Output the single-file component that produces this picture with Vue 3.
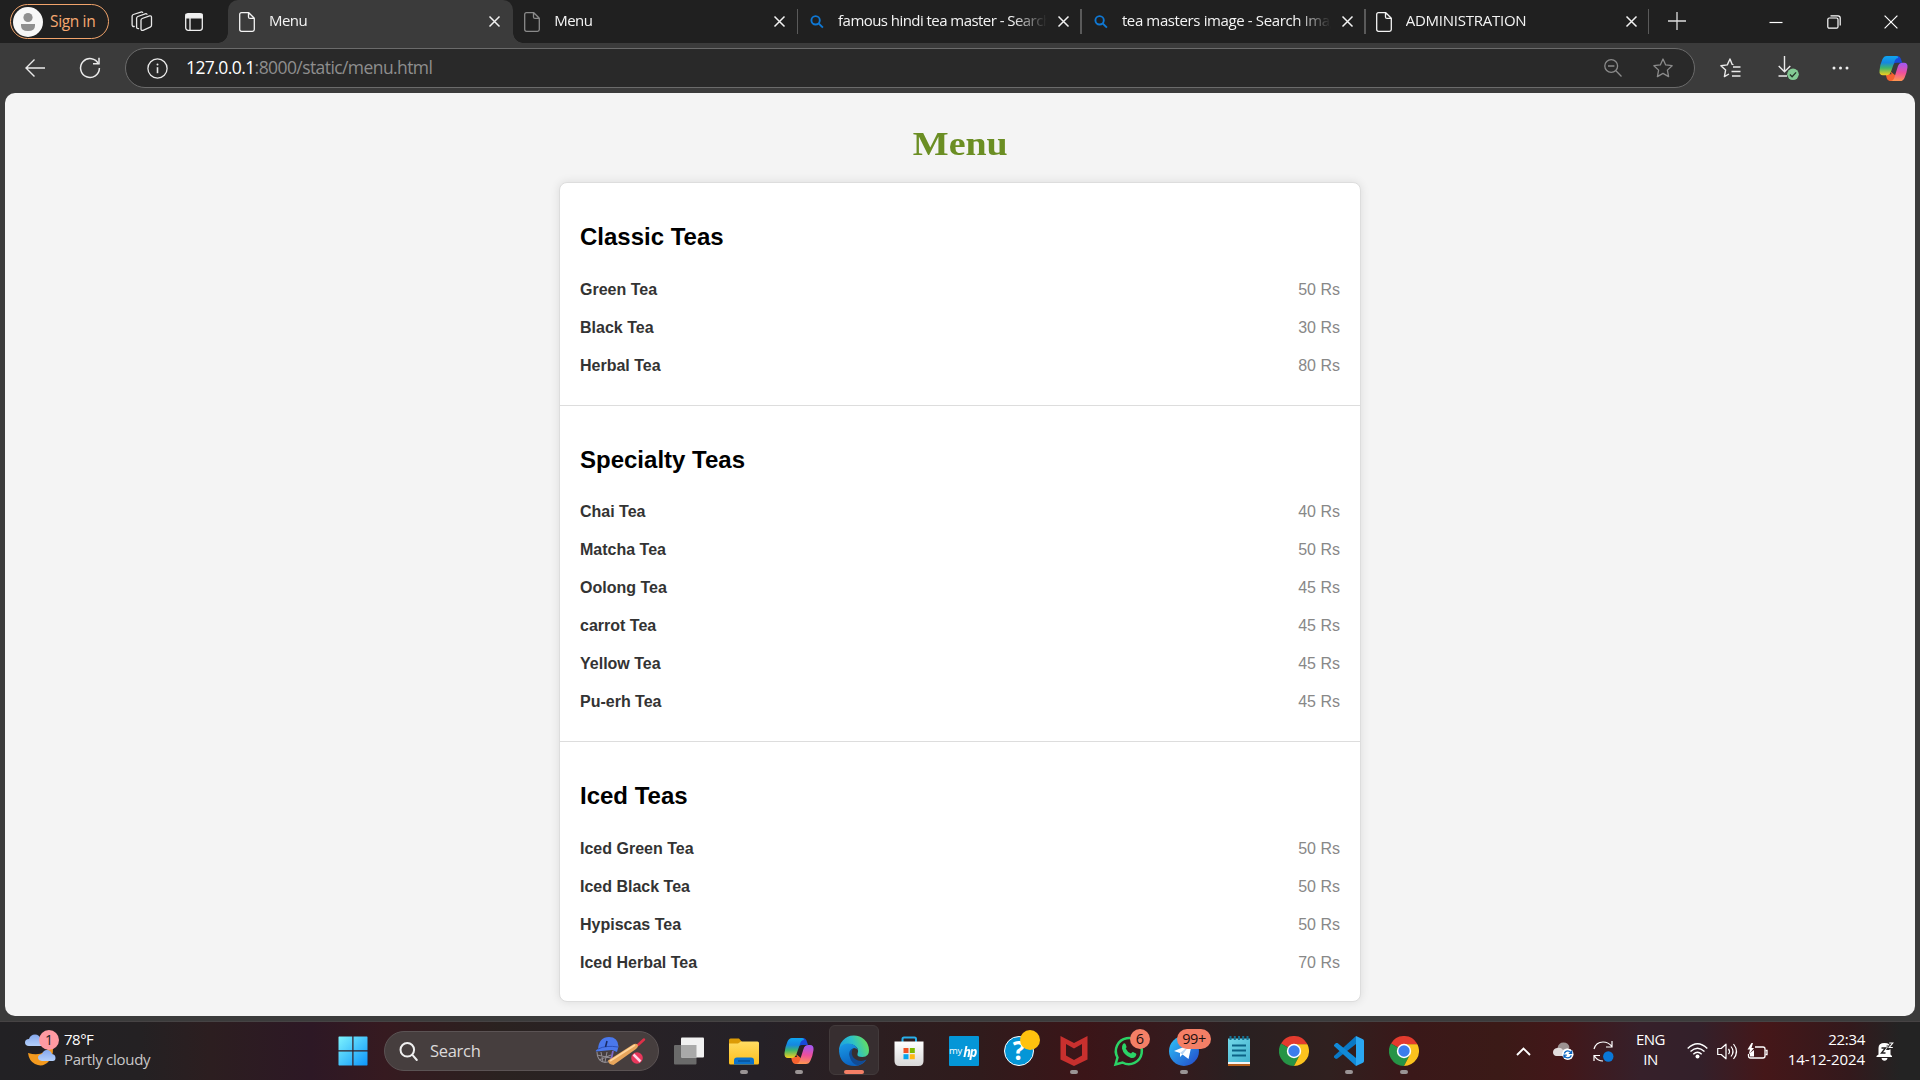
<script setup>
const tabs = [
  { title: 'Menu', icon: 'file', active: true },
  { title: 'Menu', icon: 'file', dim: true, line: true },
  { title: 'famous hindi tea master - Search', icon: 'search', line: true },
  { title: 'tea masters image - Search Images', icon: 'search', line: true, loose: true },
  { title: 'ADMINISTRATION', icon: 'file', line: true, caps: true }
]

const sections = [
  {
    name: 'Classic Teas',
    items: [['Green Tea', 50], ['Black Tea', 30], ['Herbal Tea', 80]]
  },
  {
    name: 'Specialty Teas',
    items: [
      ['Chai Tea', 40], ['Matcha Tea', 50], ['Oolong Tea', 45],
      ['carrot Tea', 45], ['Yellow Tea', 45], ['Pu-erh Tea', 45]
    ]
  },
  {
    name: 'Iced Teas',
    items: [['Iced Green Tea', 50], ['Iced Black Tea', 50], ['Hypiscas Tea', 50], ['Iced Herbal Tea', 70]]
  }
]

const apps = [
  { id: 'taskview' },
  { id: 'explorer', running: true },
  { id: 'copilot', running: true },
  { id: 'edge', focused: true },
  { id: 'store' },
  { id: 'myhp' },
  { id: 'help', dot: true },
  { id: 'mcafee', running: true },
  { id: 'whatsapp', badge: '6' },
  { id: 'telegram', running: true, badge: '99+' },
  { id: 'notepad' },
  { id: 'chrome' },
  { id: 'vscode', running: true },
  { id: 'chrome', running: true }
]
</script>

<template>
  <div class="screen">
    <!-- shared gradients and symbols -->
    <svg class="defs" width="0" height="0" aria-hidden="true">
      <defs>
        <linearGradient id="cpA" x1="0" y1="0" x2="0" y2="1">
          <stop offset="0" stop-color="#0fa5f0" /><stop offset=".35" stop-color="#1687e0" />
          <stop offset=".62" stop-color="#3fb56b" /><stop offset="1" stop-color="#f7cf1c" />
        </linearGradient>
        <linearGradient id="cpB" x1=".3" y1="0" x2=".2" y2="1">
          <stop offset="0" stop-color="#a457f0" /><stop offset=".5" stop-color="#ee4f9c" />
          <stop offset="1" stop-color="#ff9a4d" />
        </linearGradient>
        <linearGradient id="edA" x1="0" y1=".6" x2="1" y2=".3">
          <stop offset="0" stop-color="#1b9de2" /><stop offset=".5" stop-color="#2cc0c8" /><stop offset="1" stop-color="#6be356" />
        </linearGradient>
        <linearGradient id="edB" x1="0" y1="0" x2=".4" y2="1">
          <stop offset="0" stop-color="#1a9be6" /><stop offset="1" stop-color="#0b62c0" />
        </linearGradient>
        <linearGradient id="fold" x1="0" y1="0" x2="0" y2="1">
          <stop offset="0" stop-color="#ffdc63" /><stop offset="1" stop-color="#fdbf1c" />
        </linearGradient>
        <linearGradient id="winG" x1="0" y1="0" x2="1" y2="1">
          <stop offset="0" stop-color="#7df3fd" /><stop offset="1" stop-color="#0d95fb" />
        </linearGradient>
        <linearGradient id="storeG" x1="0" y1="0" x2="0" y2="1">
          <stop offset="0" stop-color="#fff" /><stop offset="1" stop-color="#d8d8d8" />
        </linearGradient>
        <linearGradient id="tgG" x1="0" y1="0" x2="1" y2="1">
          <stop offset="0" stop-color="#2cc6fa" /><stop offset="1" stop-color="#2447c8" />
        </linearGradient>
        <linearGradient id="noteG" x1="0" y1="0" x2="1" y2="1">
          <stop offset="0" stop-color="#72d8e9" /><stop offset="1" stop-color="#44b2cf" />
        </linearGradient>
        <linearGradient id="cloudG" x1="0" y1="0" x2="0" y2="1">
          <stop offset="0" stop-color="#86a9ee" /><stop offset="1" stop-color="#b4d0fb" />
        </linearGradient>
      </defs>
      <symbol id="copilot" viewBox="0 0 30 28">
        <path d="M15 1h4q3 0 4 4l1 3h-6q-3 0-4 3z" fill="#1a49d8" />
        <path d="M7 20h6l-1-3 6 5q-1 5-4 5h-3q-2 0-3-3z" fill="#f4622f" />
        <path d="M8 1h10q2 0 2 2-3 0-4 4l-3.500 10q-1.500 4-5 4H4q-4 0-3.500-5Q1 10 3.500 4.500 5 1 8 1z" fill="url(#cpA)" />
        <path d="M22 27H12q3-.5 4-4l3.500-11q1-4 5-4H26q4 0 3.500 5-.8 6-3 10.500Q25 27 22 27z" fill="url(#cpB)" />
      </symbol>
      <symbol id="chrome" viewBox="0 0 30 30">
        <path d="M15 15L2 7.500A15 15 0 0 1 28 7.500L28 8.500H15z" fill="#e33b2e" />
        <path d="M15 15L2 7.500A15 15 0 0 0 15 30L21 18.500z" fill="#269446" />
        <path d="M15 8.200H28.400A15 15 0 0 1 15 30L21 18.500z" fill="#fcc31e" />
        <circle cx="15" cy="15" r="7.200" fill="#fff" /><circle cx="15" cy="15" r="5.700" fill="#3b7ded" />
      </symbol>
    </svg>

    <header class="tabbar">
      <div class="profile">
        <svg width="30" height="30" viewBox="0 0 30 30"><circle cx="15" cy="15" r="15" fill="#f7f7f7" /><circle cx="15" cy="10.500" r="4.600" fill="#8f8f8f" /><path d="M8 17h14v1.500q0 5.500-7 5.500t-7-5.500z" fill="#8f8f8f" /></svg>
        <span>Sign in</span>
      </div>
      <svg class="workspaces" width="22" height="22" viewBox="0 0 22 22" fill="none" stroke="#e8e8e8" stroke-width="1.300" stroke-linejoin="round" stroke-linecap="round">
        <path d="M10 9.300q0-1.300 1.200-1.800l7.300-2.600q2-.5 2 1.300v8q0 1.400-1.300 1.900l-7.200 3.200q-2 .6-2-1.300z" />
        <path d="M7.600 17.600q-2 .2-2-1.600V7.300q0-1.300 1.200-1.800l7.400-2.700q1.300-.4 1.800.5" />
        <path d="M3.200 15.500q-2.100.1-2.100-1.700V5.200q0-1.200 1.200-1.700l7.500-2.400q1.200-.4 1.800.3" />
      </svg>
      <svg class="vtabs" width="18" height="18" viewBox="0 0 18 18" fill="none" stroke="#f0f0f0" stroke-width="1.300"><rect x=".7" y=".7" width="16.600" height="16.600" rx="2.500" /><path d="M1 1.500h16v3.400H1z" fill="#f0f0f0" /><path d="M5 5v12" /></svg>

      <div class="tabs">
        <div v-for="(t, i) in tabs" :key="i" class="tab" :class="{ active: t.active, line: t.line, dim: t.dim, caps: t.caps, loose: t.loose }">
          <svg v-if="t.icon === 'file'" class="favicon" width="16" height="20" viewBox="0 0 16 20" fill="none" stroke="currentColor" stroke-width="1.300" stroke-linejoin="round"><path d="M2.500.7h7.300l5.500 5.500v11.300q0 1.800-1.800 1.800h-11q-1.800 0-1.800-1.800v-15Q.7.700 2.500.7zM9.500.9v4q0 1.500 1.500 1.500h4.200" /></svg>
          <svg v-else class="favicon" width="16" height="16" viewBox="0 0 16 16" fill="none" stroke="#0f78d4" stroke-width="1.900"><circle cx="7.600" cy="6.300" r="4.200" /><path d="M10.600 9.300l4.300 4.300" /></svg>
          <span class="title">{{ t.title }}</span>
          <svg class="x" width="11" height="11" viewBox="0 0 11 11" stroke="#f2f2f2" stroke-width="1.500"><path d="M.5.500l10 10M10.500.500l-10 10" /></svg>
        </div>
      </div>

      <svg class="plus" width="18" height="18" viewBox="0 0 18 18" stroke="#dedede" stroke-width="1.300"><path d="M9 0v18M0 9h18" /></svg>
      <div class="winbtns">
        <svg width="14" height="14" viewBox="0 0 14 14" fill="none" stroke="#fff" stroke-width="1.200"><path d="M.5 7.500h13" /></svg>
        <svg width="14" height="14" viewBox="0 0 14 14" fill="none" stroke="#fff" stroke-width="1.200"><rect x=".8" y="3" width="10.200" height="10.200" rx="1.500" /><path d="M3.500.8h7.500q2.200 0 2.200 2.200v7.500" /></svg>
        <svg width="14" height="14" viewBox="0 0 14 14" fill="none" stroke="#fff" stroke-width="1.200"><path d="M.6.600l12.800 12.800M13.400.600L.6 13.400" /></svg>
      </div>
    </header>

    <div class="toolbar">
      <svg class="back" width="20" height="18" viewBox="0 0 20 18" fill="none" stroke="#eaeaea" stroke-width="1.400"><path d="M20 9H1M9.500.5L1 9l8.500 8.500" /></svg>
      <svg class="reload" width="22" height="22" viewBox="0 0 22 22" fill="none" stroke="#eaeaea" stroke-width="1.500"><path d="M19.500 7A9.400 9.400 0 1 0 20.400 11" /><path d="M14 6.800h6V.8" /></svg>
      <div class="address">
        <svg class="info" width="21" height="21" viewBox="0 0 21 21" fill="none" stroke="#eaeaea" stroke-width="1.300"><circle cx="10.500" cy="10.500" r="9.600" /><path d="M10.500 9.200v6" stroke-width="1.600" /><circle cx="10.500" cy="6.500" r="1" fill="#eaeaea" stroke="none" /></svg>
        <span class="url"><b>127.0.0.1</b>:8000/static/menu.html</span>
        <svg class="zoomout" width="18" height="18" viewBox="0 0 18 18" fill="none" stroke="#8b8b8b" stroke-width="1.300"><circle cx="7.200" cy="7" r="6.400" /><path d="M11.900 11.700l5.600 5.800M4 7h6.400" /></svg>
        <svg class="star" width="20" height="20" viewBox="0 0 20 20" fill="none" stroke="#8b8b8b" stroke-width="1.300" stroke-linejoin="round"><path d="M10 1l2.700 5.900 6.400.8-4.700 4.400 1.200 6.500L10 15.400l-5.600 3.200 1.200-6.500L.9 7.700l6.400-.8z" /></svg>
      </div>
      <svg class="favs" width="21" height="20" viewBox="0 0 21 20" fill="none" stroke="#eaeaea" stroke-width="1.400" stroke-linejoin="round"><path d="M13.500 6.600l-1.300-.2L10 1 7.300 6.900.9 7.700l4.700 4.400-1.200 6.500L9 16M13 9h7.500M11.500 13.500h9M12 18h8.500" /></svg>
      <svg class="down" width="21" height="24" viewBox="0 0 21 24" fill="none" stroke="#eaeaea" stroke-width="1.400"><path d="M6.500 0v15.500M.7 10l5.800 5.800 5.800-5.800M.5 20h8.500" /><circle cx="15" cy="18.300" r="5.800" fill="#83cb94" stroke="none" /><path d="M11.900 18.500l2.200 2.200 4-4.300" stroke="#26352a" stroke-width="1.300" /></svg>
      <svg class="more" width="17" height="4" viewBox="0 0 17 4" fill="#eee"><circle cx="2" cy="2" r="1.500" /><circle cx="8.500" cy="2" r="1.500" /><circle cx="15" cy="2" r="1.500" /></svg>
      <svg class="cp" width="29" height="27"><use href="#copilot" /></svg>
    </div>

    <main class="page">
      <h1><span>Menu</span></h1>
      <div class="card">
        <section v-for="s in sections" :key="s.name">
          <h2>{{ s.name }}</h2>
          <div v-for="[name, price] in s.items" :key="name" class="item">
            <strong>{{ name }}</strong><span>{{ price }} Rs</span>
          </div>
        </section>
      </div>
    </main>

    <footer class="taskbar">
      <div class="weather">
        <svg width="34" height="36" viewBox="0 0 34 36">
          <path d="M3 23q10 3 16-1t8-8q3 10-3 17t-14 3Q4 31 3 23z" fill="#f39a1f" />
          <path d="M4 16q-4-.5-4-3.600T4 9Q5.500 4.500 10 4.500T15.500 9Q19 10 19 16z" fill="url(#cloudG)" />
          <path d="M17 31q-4-.5-4-3.500t4-3.500q1.500-4 5-4t5 4q3.500.5 3.500 4T27 31z" fill="url(#cloudG)" />
        </svg>
        <i class="pin">1</i>
        <p><span>78°F</span><span class="sub">Partly cloudy</span></p>
      </div>

      <svg class="start" width="30" height="30" viewBox="0 0 30 30" fill="url(#winG)"><path d="M1 .5H14.300V14.200H.5V1zM15.500.5H29l.5.500V14.200H15.500zM.5 15.400H14.300V29.500H1L.5 29zM15.500 15.400H29.500V29L29 29.500H15.500z" /></svg>

      <div class="search">
        <svg width="19" height="19" viewBox="0 0 19 19" fill="none" stroke="#f0f0f0" stroke-width="2"><circle cx="8.300" cy="7.800" r="6.800" /><path d="M13.200 12.700l4.600 5.300" stroke-linecap="round" /></svg>
        <span>Search</span>
        <svg class="cricket" width="50" height="30" viewBox="0 0 50 30">
          <g fill="none" stroke="#8f8b90" stroke-width="1.100"><path d="M2 16q0 9 8 10.500l5-1M2 19l14 3M4 24l12-5M6 16l2 10M12 16l-2 10" /></g>
          <path d="M3 13Q4 1 14 1q9 0 9.500 9.500L22 16l-5-2L1 15.500q-1-1 2-2.500z" fill="#4a78ec" /><path d="M3 13Q11 9 23 11" stroke="#2d50b8" fill="none" /><path d="M12 5l-1.500 6" stroke="#192b66" stroke-width="1.500" />
          <path d="M18 15l-2 9" stroke="#7e69c9" stroke-width="1.800" />
          <path d="M43 9l6-5.500" stroke="#df3048" stroke-width="2.500" stroke-linecap="round" />
          <path d="M13 24.500L38 8.500q3-1.500 5 .5.500 2.500-2 4L18.500 29q-5-.5-5.500-4.500z" fill="#e8a65c" /><path d="M15 25L40 9" stroke="#ffd59b" stroke-width="1.800" />
          <circle cx="42" cy="22" r="5.800" fill="#e8375b" /><path d="M38.500 18.500l7 7" stroke="#ffd5e8" stroke-width="2.500" />
        </svg>
      </div>

      <div class="apps">
        <div v-for="(a, i) in apps" :key="i" class="app" :class="{ running: a.running, focused: a.focused }">
          <svg v-if="a.id === 'taskview'" width="30" height="30" viewBox="0 0 30 30"><rect y="9" width="22.500" height="19.500" rx="1" fill="#6a6a6a" /><rect x="7" y="1.500" width="23" height="20" rx="1" fill="#f1f1f1" /><path d="M7 9h15.500v12.500H8q-1 0-1-1z" fill="#a9a9a9" /></svg>
          <svg v-else-if="a.id === 'explorer'" width="30" height="30" viewBox="0 0 30 30"><path d="M0 4q0-1.500 1.500-1.500h8.500L13 6h-1v4H0z" fill="#dc9b06" /><path d="M0 7.500h9L12 5.500h16.500Q30 5.500 30 7v20q0 1.500-1.500 1.500h-27Q0 28.500 0 27z" fill="url(#fold)" /><path d="M5 28.500v-4q0-3 3-3h14q3 0 3 3v4z" fill="#0b72cb" /><path d="M9 25h12" stroke="#084a8b" stroke-width="1.200" /></svg>
          <svg v-else-if="a.id === 'copilot'" width="30" height="28"><use href="#copilot" /></svg>
          <svg v-else-if="a.id === 'edge'" width="30" height="30" viewBox="0 0 30 30">
            <path d="M0 15A15 15 0 0 1 30 14q.3 6.500-6.500 7-6 0-5-3 1.500-2.500 0-5.500Q15 7 8 8.500 2 10 0 15z" fill="url(#edA)" />
            <path d="M0 15Q1 8 8 7.500q9-.5 11 7-1-2.500-4-2.500-5 2-3.500 8 2.500 6.500 10 6 4-.5 6-2.500-4.500 6.800-12 6.500Q1 29.500 0 15z" fill="url(#edB)" />
            <path d="M14 12.200q-5 2.500-3.500 8 2 8.300 9 9 5-1.500 8-5.700-6 3-11.500-.5-5.500-4.500-2-10.800z" fill="#114b94" />
          </svg>
          <svg v-else-if="a.id === 'store'" width="30" height="30" viewBox="0 0 30 30"><path d="M8.500 7V3q0-1.500 1.500-1.500h10.500Q22 1.500 22 3v4" fill="none" stroke="#29afea" stroke-width="2" /><path d="M.5 5.500h29V25q0 5-5 5h-19q-5 0-5-5z" fill="url(#storeG)" /><path fill="#f05125" d="M9.500 12h5v5h-5z" /><path fill="#7eb900" d="M15.800 12h5v5h-5z" /><path fill="#05a4ee" d="M9.500 18.200h5v5h-5z" /><path fill="#fdb813" d="M15.800 18.200h5v5h-5z" /></svg>
          <div v-else-if="a.id === 'myhp'" class="myhp"><small>my</small><em>hp</em></div>
          <div v-else-if="a.id === 'help'" class="help">?<i v-if="a.dot" class="ydot"></i></div>
          <svg v-else-if="a.id === 'mcafee'" width="30" height="30" viewBox="0 0 30 30"><path d="M1.500 0L15 7 28.500 0v23.500L15 30 1.500 23.500zM7 8v11.500l8 4.500 8-4.500V8l-8 4.500z" fill="#c8302e" fill-rule="evenodd" /></svg>
          <svg v-else-if="a.id === 'whatsapp'" width="30" height="30" viewBox="0 0 30 30"><path d="M1.500 28.500l2-7A13 13 0 1 1 8.500 26.500z" fill="none" stroke="#2bd366" stroke-width="2.500" /><path d="M9 8q1.500-1.500 2.500 0l1 2.500q.3 1-.8 2 1.500 3.500 5.300 5 1.200-1.800 2-1.500l3 1.500q1 .8-.5 3-2 2.200-5 1.200Q9.500 19 8 12.500 7.800 9.500 9 8z" fill="#2bd366" /></svg>
          <svg v-else-if="a.id === 'telegram'" width="30" height="30" viewBox="0 0 30 30"><circle cx="15" cy="15" r="15" fill="url(#tgG)" /><path d="M5 15L23 7.500 19.500 23l-6-4.500L11 21v-4z" fill="#fff" /><path d="M11 17l9-7-6.500 8.500" fill="#b9d7f4" /></svg>
          <svg v-else-if="a.id === 'notepad'" width="24" height="30" viewBox="0 0 24 30"><path d="M1 27h22v3H1z" fill="#b5601c" /><path d="M1 24h22v4H1z" fill="#f5f5f5" /><path d="M1 2.500h22V26H1z" fill="url(#noteG)" /><path d="M5 9.500h14M5 14.500h14M5 19.500h14" stroke="#0c6286" stroke-width="2" /><path d="M3.500 0v4M7.800 0v4M12 0v4M16.200 0v4M20.500 0v4" stroke="#157394" stroke-width="2" /></svg>
          <svg v-else-if="a.id === 'chrome'" width="30" height="30"><use href="#chrome" /></svg>
          <svg v-else width="30" height="30" viewBox="0 0 30 30"><path d="M22 0v8L3.500 22.500 2 23 0 21.500V20z" fill="#0a79c6" /><path d="M0 10v-1l2-2h1.500L22 22v8z" fill="#118ad8" /><path d="M22 0l7 3.200q1 .5 1 1.800v20q0 1.300-1 1.800L22 30z" fill="#2aa7f2" /></svg>
          <i v-if="a.badge" class="badge" :class="{ wide: a.badge.length > 1 }">{{ a.badge }}</i>
        </div>
      </div>

      <div class="tray">
        <svg class="chev" width="15" height="9" viewBox="0 0 15 9" fill="none" stroke="#fff" stroke-width="1.900"><path d="M1 8l6.500-6.500L14 8" /></svg>
        <svg class="cloud" width="21" height="18" viewBox="0 0 21 18"><path d="M4.500 6Q5.500.5 10.500.500q5 0 6 5l-7 5z" fill="#9c9292" /><path d="M3.500 14Q0 13.500 0 10.200T4 6q4-1 6 2 2-2 5-1.500 3.500.5 4.500 4L16 14z" fill="#e2dddd" /><circle cx="14.800" cy="12.300" r="5.700" fill="#fff" /><path d="M11.300 11.500q1-2.700 3.500-2.700t3.600 2.400M18.300 13.200q-1 2.600-3.500 2.600t-3.600-2.400M18.600 8.500v2.800h-2.800M11 16v-2.800h2.800" fill="none" stroke="#0a66c2" stroke-width="1.300" /></svg>
        <svg class="sync" width="21" height="21" viewBox="0 0 21 21" fill="none" stroke="#fff" stroke-width="1.200"><path d="M1 8Q3 1 10 1q5.500 0 9 4.500M19 0v6h-6M1 20v-5.500h6M1.500 15q3 5 8.500 5" /><circle cx="15.300" cy="15.500" r="5.200" fill="#0a78d7" stroke="none" /></svg>
        <p class="lang"><span>ENG</span><span>IN</span></p>
        <svg class="wifi" width="21" height="16" viewBox="0 0 21 16" fill="none" stroke="#fff" stroke-width="1.400"><path d="M.7 5.500Q10.500-4 20.300 5.500M3.500 8.500q7-6.700 14 0M6.300 11.200q4.200-4 8.400 0" /><circle cx="10.500" cy="13.500" r="2" fill="#fff" stroke="none" /></svg>
        <svg class="vol" width="21" height="17" viewBox="0 0 21 17" fill="none" stroke="#fff" stroke-width="1.200" stroke-linejoin="round"><path d="M.7 5.500h3.500L9 1.200v14.600l-4.800-4.300H.7zM11.500 5.800q2 2.700 0 5.400M14 3.500q4 5 0 10M16.500 1q6 7.500 0 15" /></svg>
        <svg class="bat" width="21" height="17" viewBox="0 0 21 17" fill="none" stroke="#fff" stroke-width="1.300"><path d="M8 4h8q2 0 2 2v7q0 2-2 2H3.500q-2 0-2-2V11" /><path d="M18.500 7.500h1.500v4h-1.500" /><path d="M4.500 0L.5 6.500H3L1.500 12 7 5H4.500L6 0z" fill="#fff" stroke="none" /><path d="M3 10l4-3v6.500H3z" fill="#fff" stroke="none" /></svg>
        <p class="clock"><span>22:34</span><span class="date">14-12-2024</span></p>
        <svg class="bell" width="18" height="19" viewBox="0 0 18 19"><path d="M2.500 6q0-5 6-5t6 5v6.500l1.500 1.500v1H.5v-1l2-1.500zM5.500 16h6q-.5 2.800-3 2.800T5.500 16z" fill="#fff" /><path d="M5.500 6h4l-4 5h4" fill="none" stroke="#242122" stroke-width="1.400" /><path d="M10.500 4h3l-3 3.500h3" fill="none" stroke="#242122" stroke-width="1" /><path d="M13 1h4l-4 5h4" fill="none" stroke="#242122" stroke-width="2.600" /><path d="M13.200 1h3.600l-3.600 4.500h3.600" fill="none" stroke="#fff" stroke-width="1.100" /></svg>
      </div>
    </footer>
  </div>
</template>

<style>
body { background: #3b3b3b; overflow: hidden; }
</style>

<style scoped>
.screen {
  width: 1920px; height: 1080px; overflow: hidden;
  display: flex; flex-direction: column;
  background: #3b3b3b;
  font-family: "Open Sans", "Noto Sans", sans-serif;
  color: #fff;
}
.defs { position: absolute; }
svg { display: block; flex: none; overflow: visible; }
p { margin: 0; }
i { font-style: normal; }

/* tab strip */
.tabbar { height: 43px; flex: none; display: flex; align-items: center; background: #202020; }
.profile {
  box-sizing: border-box; width: 99px; height: 35px; margin-left: 10px; padding-left: 2px;
  display: flex; align-items: center; gap: 7px;
  border: 1.500px solid #f0a36b; border-radius: 18px; color: #f5a871;
  font-size: 15.500px; letter-spacing: -0.350px; white-space: nowrap;
}
.profile span { position: relative; top: -1px; }
.workspaces { margin-left: 22px; }
.vtabs { margin-left: 32px; }
.tabs { display: flex; margin-left: 25px; height: 43px; }
.tab {
  box-sizing: border-box; position: relative; flex: none; width: 283.800px; height: 43px; padding-left: 11px;
  display: flex; align-items: center; color: #f4f4f4;
}
.tab.active { width: 285.300px; background: #3b3b3b; border-radius: 10px 10px 0 0; }
.tab.active::before, .tab.active::after {
  content: ""; position: absolute; bottom: 0; width: 10px; height: 10px;
}
.tab.active::before { left: -10px; background: radial-gradient(circle at 0 0, #202020 9.500px, #3b3b3b 10px); }
.tab.active::after { right: -10px; background: radial-gradient(circle at 100% 0, #202020 9.500px, #3b3b3b 10px); }
.tab.line::after { content: ""; position: absolute; right: -1px; top: 9px; width: 1.500px; height: 25px; background: #5a5a5a; }
.favicon { margin-top: 1px; }
.tab.dim .favicon { color: #8a8a8a; }
.title {
  width: 209px; margin-left: 14px; font-size: 15px; line-height: 22px; letter-spacing: -0.550px;
  white-space: nowrap; overflow: hidden; position: relative; top: -2px;
  -webkit-mask-image: linear-gradient(90deg, #000 175px, transparent 209px);
  mask-image: linear-gradient(90deg, #000 175px, transparent 209px);
}
.tab.caps .title { letter-spacing: -0.250px; }
.tab.loose .title { letter-spacing: -0.380px; }
.x { margin-left: 11px; }
.plus { margin-left: 19.500px; margin-top: -2px; }
.winbtns { display: flex; gap: 43.500px; margin-left: 83.500px; }

/* toolbar */
.toolbar { height: 50px; flex: none; display: flex; align-items: center; }
.back { margin-left: 25px; }
.reload { margin-left: 34px; }
.address {
  box-sizing: border-box; width: 1570px; height: 40px; margin-left: 24px; padding-left: 21px;
  display: flex; align-items: center; background: #292929; border: 1px solid #6b6b6b; border-radius: 20px;
}
.url { width: 1418px; margin-left: 18px; font-size: 17.500px; letter-spacing: -0.580px; color: #8e8e8e; position: relative; top: -1px; }
.url b { font-weight: 400; color: #fff; }
.star { margin-left: 31px; }
.favs { margin-left: 25px; }
.down { margin-left: 37px; }
.more { margin-left: 32.500px; }
.cp { margin-left: 30px; }

/* document */
.page {
  box-sizing: border-box; width: 1910px; height: 923px; flex: none; margin: 0 auto; overflow: hidden;
  border-radius: 10px; background: #f4f4f4; padding-top: 32px;
  font-family: "Liberation Sans", Arial, sans-serif;
}
h1 {
  margin: 0 0 19.200px; height: 38px; text-align: center; color: #6b8e23;
  font: bold 33px/38px "Liberation Serif", serif;
}
h1 span { display: inline-block; transform: scaleX(1.150); }
.card {
  box-sizing: border-box; width: 802px; margin: 0 auto;
  background: #fff; border: 1px solid #ddd; border-radius: 8px; box-shadow: 0 0 10px rgba(0, 0, 0, 0.1);
}
section { padding: 20px; border-bottom: 1px solid #ddd; }
section:last-child { border-bottom: 0; padding-bottom: 19.300px; }
h2 { margin: 20px 0 20.500px; font-size: 24px; line-height: 27px; color: #000; }
.item { display: flex; justify-content: space-between; padding: 10px 0; font-size: 16px; line-height: 18px; color: #888; }
.item strong { color: #333; }

/* taskbar */
.taskbar {
  box-sizing: border-box; height: 59px; margin-top: 5px; flex: none; display: flex; align-items: center;
  border-top: 1px solid #464344;
  background: linear-gradient(90deg, #222124 0, #242123 140px, #2c1e20 210px, #2d1825 310px, #361a20 385px, #2a2220 500px, #282226 620px, #252127 760px, #2c1e20 880px, #301b1c 980px, #3b1518 1085px, #351a1d 1170px, #292021 1240px, #30201f 1330px, #3a1819 1410px, #3b1a17 1500px, #421719 1560px, #36202a 1640px, #33202a 1700px, #451719 1765px, #33191c 1850px, #232323 1900px);
}
.weather { box-sizing: border-box; position: relative; display: flex; align-items: center; width: 337px; padding-left: 25px; }
.weather svg { position: relative; top: -3px; }
.pin {
  position: absolute; left: 39px; top: -1px; width: 20px; height: 20px; border-radius: 50%;
  background: #ff9aa2; color: #222; font-size: 14px; line-height: 20px; text-align: center;
}
.weather p, .lang, .clock { display: flex; flex-direction: column; font-size: 15px; line-height: 20px; position: relative; top: -2px; }
.weather p { margin-left: 5px; letter-spacing: -0.500px; }
.weather .sub { color: #c9c7c8; letter-spacing: -0.280px; }
.start { margin-left: 0.500px; }
.search {
  box-sizing: border-box; width: 275px; height: 40px; margin-left: 16.500px; padding-left: 14px; border-radius: 20px;
  display: flex; align-items: center; background: #463e3e; border: 1px solid #5b5354;
  font-size: 16.500px; letter-spacing: -0.300px; color: #dcdada;
}
.search span { width: 165px; margin-left: 12px; position: relative; top: -1px; }
.cricket { flex: none; }
.apps { display: flex; margin-left: 2.500px; }
.app { position: relative; width: 55px; height: 58px; display: flex; align-items: center; justify-content: center; }
.app > * { position: relative; z-index: 1; }
.app.running::after, .app.focused::after {
  content: ""; position: absolute; bottom: 6px; left: 23.500px; width: 8px; height: 4px; border-radius: 2px; background: #9a9495;
}
.app.focused::after { left: 17.500px; width: 20px; background: #f47f66; z-index: 2; }
.app.focused::before {
  content: ""; position: absolute; box-sizing: border-box; left: 2.500px; top: 3px; width: 50px; height: 50px;
  border-radius: 6px; background: #372e30; border: 1px solid #423a3b;
}
.app > .badge {
  position: absolute; z-index: 3; left: 28.500px; top: 7px; min-width: 20px; height: 20px; border-radius: 10px;
  background: #f47f66; color: #1c1010; font-size: 14.500px; line-height: 20px; text-align: center;
}
.app > .badge.wide { left: 20.500px; width: 34px; letter-spacing: -0.400px; }
.myhp { width: 30px; height: 30px; background: #0496d7; border-radius: 1px; display: flex; justify-content: center; align-items: center; line-height: 30px; }
.myhp small { font-size: 9.500px; letter-spacing: -0.300px; }
.myhp em { font-size: 15px; font-weight: 700; letter-spacing: -1.500px; padding-right: 2px; transform: scaleX(.85); }
.help {
  box-sizing: border-box; width: 30px; height: 30px; border-radius: 50%; border: 1.500px solid #fff;
  background: #0496d7; font-size: 26px; font-weight: 700; line-height: 26px; text-align: center;
}
.ydot { position: absolute; left: 15px; top: -7px; width: 20px; height: 20px; border-radius: 50%; background: #ffc20e; }

.tray { display: flex; align-items: center; margin-left: 84px; }
.cloud { margin-left: 22px; }
.sync { margin-left: 19px; }
.lang { width: 60px; margin-left: 7px; text-align: center; letter-spacing: -0.500px; }
.wifi { margin-left: 6.500px; }
.vol { margin-left: 9px; }
.bat { margin-left: 9px; }
.clock { width: 90px; margin-left: 7px; text-align: right; letter-spacing: -0.300px; }
.clock .date { letter-spacing: -0.100px; }
.bell { margin-left: 11px; }
</style>
